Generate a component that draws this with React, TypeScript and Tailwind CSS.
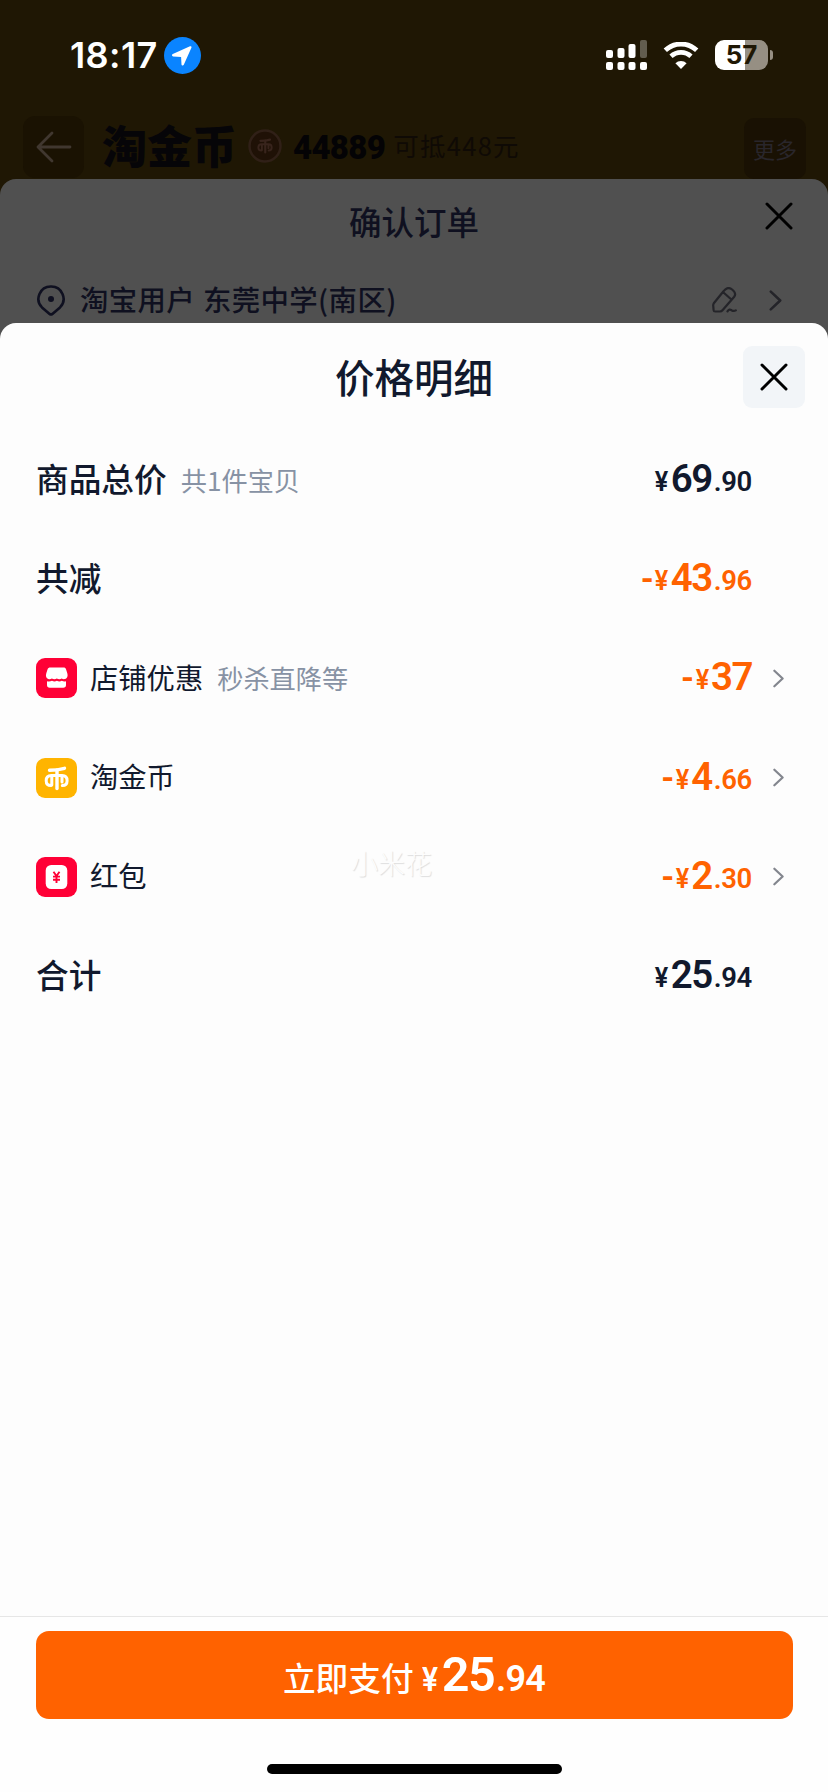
import React from "react";

const cjk = "font-['Noto_Sans_CJK_SC',sans-serif]";
const num = "font-['Roboto',sans-serif]";

type PriceProps = { sign?: boolean; whole: string; cents?: string; tone: "dark" | "orange" };

function Price({ sign, whole, cents, tone }: PriceProps) {
  return (
    <span
      className={`flex translate-y-px items-baseline whitespace-nowrap ${num} leading-[40px] ${
        tone === "dark" ? "text-[#11192d]" : "text-[#ff6200]"
      }`}
    >
      {sign && <span className="mr-px -translate-y-px text-[33px] font-bold">-</span>}
      <span className="mr-[2px] flex w-[14px] -translate-y-px justify-center">
        <span className="inline-block scale-x-[0.9] text-[28px] font-semibold">¥</span>
      </span>
      <span className="text-[38.500px] font-semibold tracking-[-1.500px]">{whole}</span>
      {cents && <span className="-translate-y-px pl-[2px] text-[27.500px] font-semibold tracking-[-0.300px]">.{cents}</span>}
    </span>
  );
}

function Chevron({ className }: { className: string }) {
  return (
    <svg viewBox="0 0 12 20" className={className} fill="none" stroke="currentColor" strokeWidth="2.400" strokeLinecap="round" strokeLinejoin="round">
      <path d="M1.500 1.500 10.500 10 1.500 18.500" />
    </svg>
  );
}

function Cross() {
  return (
    <svg viewBox="0 0 28 28" className="size-7" fill="none" stroke="currentColor" strokeWidth="3" strokeLinecap="round">
      <path d="M2 2 26 26M26 2 2 26" />
    </svg>
  );
}

function ShopIcon() {
  return (
    <svg viewBox="0 0 41 40" className="h-10 w-[41px]">
      <rect width="41" height="40" rx="9" fill="#ff0036" />
      <path
        d="M14.500 9.500h12.900c1.500 0 2.300.6 2.700 1.900l1.200 3.900c.9 3-.2 5.100-2.100 5.700-1.500.4-2.700 0-3.500-.5-1.300.9-3.300.9-4.900 0-1.400.9-3.500.9-4.900 0-1.200.8-2.300.9-3.600.5-2-.6-2.900-2.700-2-5.700l1.200-3.900c.5-1.300 1.400-1.900 3-1.900Z"
        fill="#fff"
      />
      <path
        d="M11 23.300c1.800.4 3.400.3 5-.5 1.500.9 3.500.9 4.900 0 1.500.9 3.500.9 4.900 0 1.200.7 2.600.9 4.200.5v3.700c0 1.800-1 2.800-2.800 2.800H13.800C12 29.800 11 28.800 11 27Z"
        fill="#fff"
      />
    </svg>
  );
}

function CoinGlyph() {
  return (
    <g fill="none" stroke="currentColor" strokeWidth="3.400" strokeLinecap="round" strokeLinejoin="round">
      <path d="M13.500 12.200C19 12.200 24 11.500 28.500 10.300" />
      <path d="M21 12v18.500" />
      <path d="M15 27.500c-3.500 0-4.800-1.800-4.800-4.800 0-3.200 1.700-5.100 5.100-5.100h10.900c3.400 0 4.900 1.900 4.900 5.100 0 3.300-1.400 4.800-4.800 4.800M15.800 18.500v8.500M26 18.500v5.500" strokeWidth="3" />
    </g>
  );
}

function CoinIcon() {
  return (
    <svg viewBox="0 0 41 40" className="h-10 w-[41px] text-white">
      <rect width="41" height="40" rx="9" fill="#ffb400" />
      <CoinGlyph />
    </svg>
  );
}

function PacketIcon() {
  return (
    <svg viewBox="0 0 41 40" className="h-10 w-[41px]">
      <rect width="41" height="40" rx="9" fill="#ff0036" />
      <rect x="9.700" y="8" width="21.600" height="24" rx="5.500" fill="#fff" />
      <path d="M17.500 14.800 20.500 19l3-4.200M20.500 19v7M17 19.600h7M17 22.800h7" fill="none" stroke="#ff0036" strokeWidth="1.900" />
    </svg>
  );
}

function StatusBar() {
  return (
    <div className="flex h-[112px] items-center pl-[70px] pr-[55px] text-white">
      <span className="mt-[-2px] w-[94px] whitespace-nowrap font-['Inter',sans-serif] text-[36px] font-semibold tracking-[0.400px]">18:17</span>
      <svg viewBox="0 0 37 37" className="mt-[-2px] size-[37px]">
        <circle cx="18.500" cy="18.500" r="18.500" fill="#0a84ff" />
        <path d="M26 9.300c1.100-.4 1.800.4 1.400 1.400L19.800 27.800c-.5 1.200-2.200 1-2.300-.3l-.4-7.600-8-.5c-1.300-.1-1.500-1.800-.3-2.300Z" fill="#fff" />
      </svg>
      <div className="flex-1" />
      <svg viewBox="0 0 42 30" className="mr-[15px] mt-[-2px] h-[30px] w-[42px]" fill="#fff">
        <rect x="0" y="10" width="7" height="8" rx="2" />
        <rect x="11.500" y="8" width="7" height="10" rx="2" />
        <rect x="22.500" y="4" width="7" height="14" rx="2" />
        <rect x="34" y="0" width="7" height="18" rx="2" opacity="0.300" />
        <rect x="0" y="22" width="7" height="8" rx="2" />
        <rect x="11.500" y="22" width="7" height="8" rx="2" />
        <rect x="22.500" y="22" width="7" height="8" rx="2" />
        <rect x="34" y="22" width="7" height="8" rx="2" />
      </svg>
      <svg viewBox="0 0 36 27" className="mr-4 mt-[-2px] h-[27px] w-[36px]">
        <path d="M2.300 8.300a22.800 22.800 0 0 1 31.400 0" fill="none" stroke="#fff" strokeWidth="4.800" />
        <path d="M8 14.300a14.600 14.600 0 0 1 20 0" fill="none" stroke="#fff" strokeWidth="4.600" />
        <path d="M18 27l-5.600-5.800a8 8 0 0 1 11.200 0Z" fill="#fff" />
      </svg>
      <div className="mt-[-2px] flex items-center">
        <div className="flex h-[30px] w-[53px] items-center justify-center rounded-[9px] bg-[linear-gradient(90deg,#ffffff_57%,#968f83_57%)] font-['Inter',sans-serif] text-[26px] font-bold leading-none text-[#1f1704]">
          57
        </div>
        <div className="ml-[2px] h-[10px] w-[3px] rounded-r-full bg-[#968f83]" />
      </div>
    </div>
  );
}

function StoreHeader() {
  return (
    <div className="flex h-[67px] items-start pl-[23px] pr-[22px] pt-[4px]">
      <div className="flex h-[62px] w-[61px] items-center justify-center rounded-[12px] bg-[#1a1202] text-[#40372f]">
        <svg viewBox="0 0 36 32" className="h-8 w-9" fill="none" stroke="currentColor" strokeWidth="2.800" strokeLinecap="round" strokeLinejoin="round">
          <path d="M34 16H2M16 2 2 16l14 14" />
        </svg>
      </div>
      <span className={`ml-[18px] ${cjk} text-[45px] font-black leading-[58px] text-[#060508]`}>淘金币</span>
      <svg viewBox="0 0 34 36" className="ml-[11px] mt-[12px] h-[36px] w-[34px] text-[#38241c]">
        <circle cx="17" cy="18" r="15.500" fill="#1f1106" stroke="#302017" strokeWidth="2.500" />
        <g transform="translate(3.800 5) scale(.64)">
          <CoinGlyph />
        </g>
      </svg>
      <span className={`ml-[11px] mt-[3px] ${num} text-[33px] font-black leading-[58px] tracking-[-0.700px] text-[#040305]`}>44889</span>
      <span className={`ml-[8px] ${cjk} text-[25.500px] font-normal leading-[58px] tracking-[1.300px] text-[#0f0a05]`}>可抵448元</span>
      <div className="flex-1" />
      <div className={`mt-[2px] flex h-[61px] w-[62px] items-center justify-center rounded-[10px] bg-[#191103] ${cjk} text-[22px] text-[#29262b]`}>更多</div>
    </div>
  );
}

function OrderSheet() {
  return (
    <div className="h-[144px] rounded-t-[16px] bg-[#505050] text-[#0f1020]">
      <div className="grid h-[84px] grid-cols-[1fr_auto_1fr] items-center">
        <span />
        <h2 className={`${cjk} text-[32.500px] font-medium leading-none`}>确认订单</h2>
        <span className="mb-[11px] mr-[35px] justify-self-end text-black">
          <Cross />
        </span>
      </div>
      <div className="flex h-[74px] items-center pl-[37px] pr-[46px]">
        <svg viewBox="0 0 28 31" className="h-[31px] w-[28px]" fill="none" stroke="currentColor" strokeWidth="2.600" strokeLinejoin="round">
          <path d="M14 1.500A12.300 12.300 0 0 0 5 22.400l7.600 6.500c.9.700 1.900.7 2.800 0L23 22.400A12.300 12.300 0 0 0 14 1.500Z" />
          <circle cx="14" cy="14" r="3" fill="currentColor" stroke="none" />
        </svg>
        <span className={`ml-[15px] mt-[-2px] whitespace-nowrap ${cjk} text-[28.400px] font-medium leading-none tracking-[0.400px] [word-spacing:1px]`}>
          淘宝用户 东莞中学(南区)
        </span>
        <div className="flex-1" />
        <svg viewBox="0 0 25 26" className="mr-[32px] h-[26px] w-[25px] text-[#242429]" fill="none" stroke="currentColor" strokeWidth="2.200" strokeLinejoin="round" strokeLinecap="round">
          <path d="M11.500 4.200 13.500 2.300c1.900-1.600 4.400-1.500 6.600.2l1.300 1.200c2 2 2.200 4.300.6 6.300L10.500 23.300c-.7.900-1.500 1.200-2.500 1.200H3.200c-.9 0-1.500-.5-1.600-1.300L1.200 18.300c0-.9.200-1.600.8-2.300ZM11.500 5.500l7.300 6.500M15.500 24.300c1.300-2.100 2.600-2.100 4-1.100 1.400.9 2.900 1 4.300.2M11.500 4.200 2 16" />
        </svg>
        <Chevron className="h-[21px] w-[13px] text-[#242429]" />
      </div>
    </div>
  );
}

type RowProps = { label: string; note?: string; icon?: React.ReactNode; price: PriceProps; bold?: boolean };

function Row({ label, note, icon, price, bold }: RowProps) {
  return (
    <li className="flex h-[99.300px] items-center">
      {icon && <span className="mr-[13px]">{icon}</span>}
      <span
        className={`mt-[-3px] whitespace-nowrap ${cjk} leading-none text-[#11192d] ${bold ? "text-[32.700px] font-medium" : "text-[28.300px] font-normal"}`}
      >
        {label}
      </span>
      {note && <span className={`ml-[14px] whitespace-nowrap ${cjk} text-[26.200px] font-normal leading-none text-[#8792a4]`}>{note}</span>}
      <div className="flex-1" />
      <Price {...price} />
      <span className="flex w-[34px] pl-[21px]">{icon && <Chevron className="h-[19px] w-[11px] text-[#83868e]" />}</span>
    </li>
  );
}

const rows: RowProps[] = [
  { label: "商品总价", note: "共1件宝贝", bold: true, price: { whole: "69", cents: "90", tone: "dark" } },
  { label: "共减", bold: true, price: { sign: true, whole: "43", cents: "96", tone: "orange" } },
  { label: "店铺优惠", note: "秒杀直降等", icon: <ShopIcon />, price: { sign: true, whole: "37", tone: "orange" } },
  { label: "淘金币", icon: <CoinIcon />, price: { sign: true, whole: "4", cents: "66", tone: "orange" } },
  { label: "红包", icon: <PacketIcon />, price: { sign: true, whole: "2", cents: "30", tone: "orange" } },
  { label: "合计", bold: true, price: { whole: "25", cents: "94", tone: "dark" } },
];

export default function App() {
  return (
    <div className="flex h-[1792px] w-[828px] flex-col overflow-hidden bg-[#1f1704]">
      <StatusBar />
      <StoreHeader />
      <div className="flex flex-1 flex-col bg-[linear-gradient(#1f1704_20px,#505050_20px)]">
        <OrderSheet />
        <section className="relative flex flex-1 flex-col rounded-t-[16px] bg-[#fdfdfd]">
          <header className="grid h-[107px] grid-cols-[1fr_auto_1fr] items-center">
            <span />
            <h1 className={`${cjk} mt-[-2px] text-[39.500px] font-medium leading-none text-[#11192d]`}>价格明细</h1>
            <button className="mr-[23px] mt-px flex size-[62px] items-center justify-center justify-self-end rounded-[9px] bg-[#f2f5f8] text-black">
              <Cross />
            </button>
          </header>
          <ul className="pl-[36px] pr-[42px]">
            {rows.map((row) => (
              <Row key={row.label} {...row} />
            ))}
          </ul>
          <span
            className={`absolute left-[351px] top-[520px] ${cjk} text-[27px] font-light text-[#fdfdfd] [text-shadow:1px_1px_1px_#dcdcdc]`}
          >
            小米花
          </span>
          <footer className="mt-auto flex h-[176px] flex-col items-center border-t-[1.500px] border-[#e6e6e6] bg-[#fefefe] pt-[14px]">
            <button className="flex h-[88px] w-[757px] items-center justify-center rounded-[13px] bg-[#ff6200] text-white">
              <span className={`flex items-baseline ${num} font-semibold leading-none`}>
                <span className={`${cjk} text-[32.700px] font-medium leading-none`}>立即支付</span>
                <span className="ml-[8px] mr-[3px] flex w-[17px] justify-center">
                  <span className="inline-block scale-x-[0.88] text-[34px]">¥</span>
                </span>
                <span className="text-[48.500px] tracking-[-1.500px]">25</span>
                <span className="pl-[2px] text-[36px] tracking-[-0.800px]">.94</span>
              </span>
            </button>
            <div className="mt-[45px] h-[10px] w-[295px] rounded-full bg-black" />
          </footer>
        </section>
      </div>
    </div>
  );
}
